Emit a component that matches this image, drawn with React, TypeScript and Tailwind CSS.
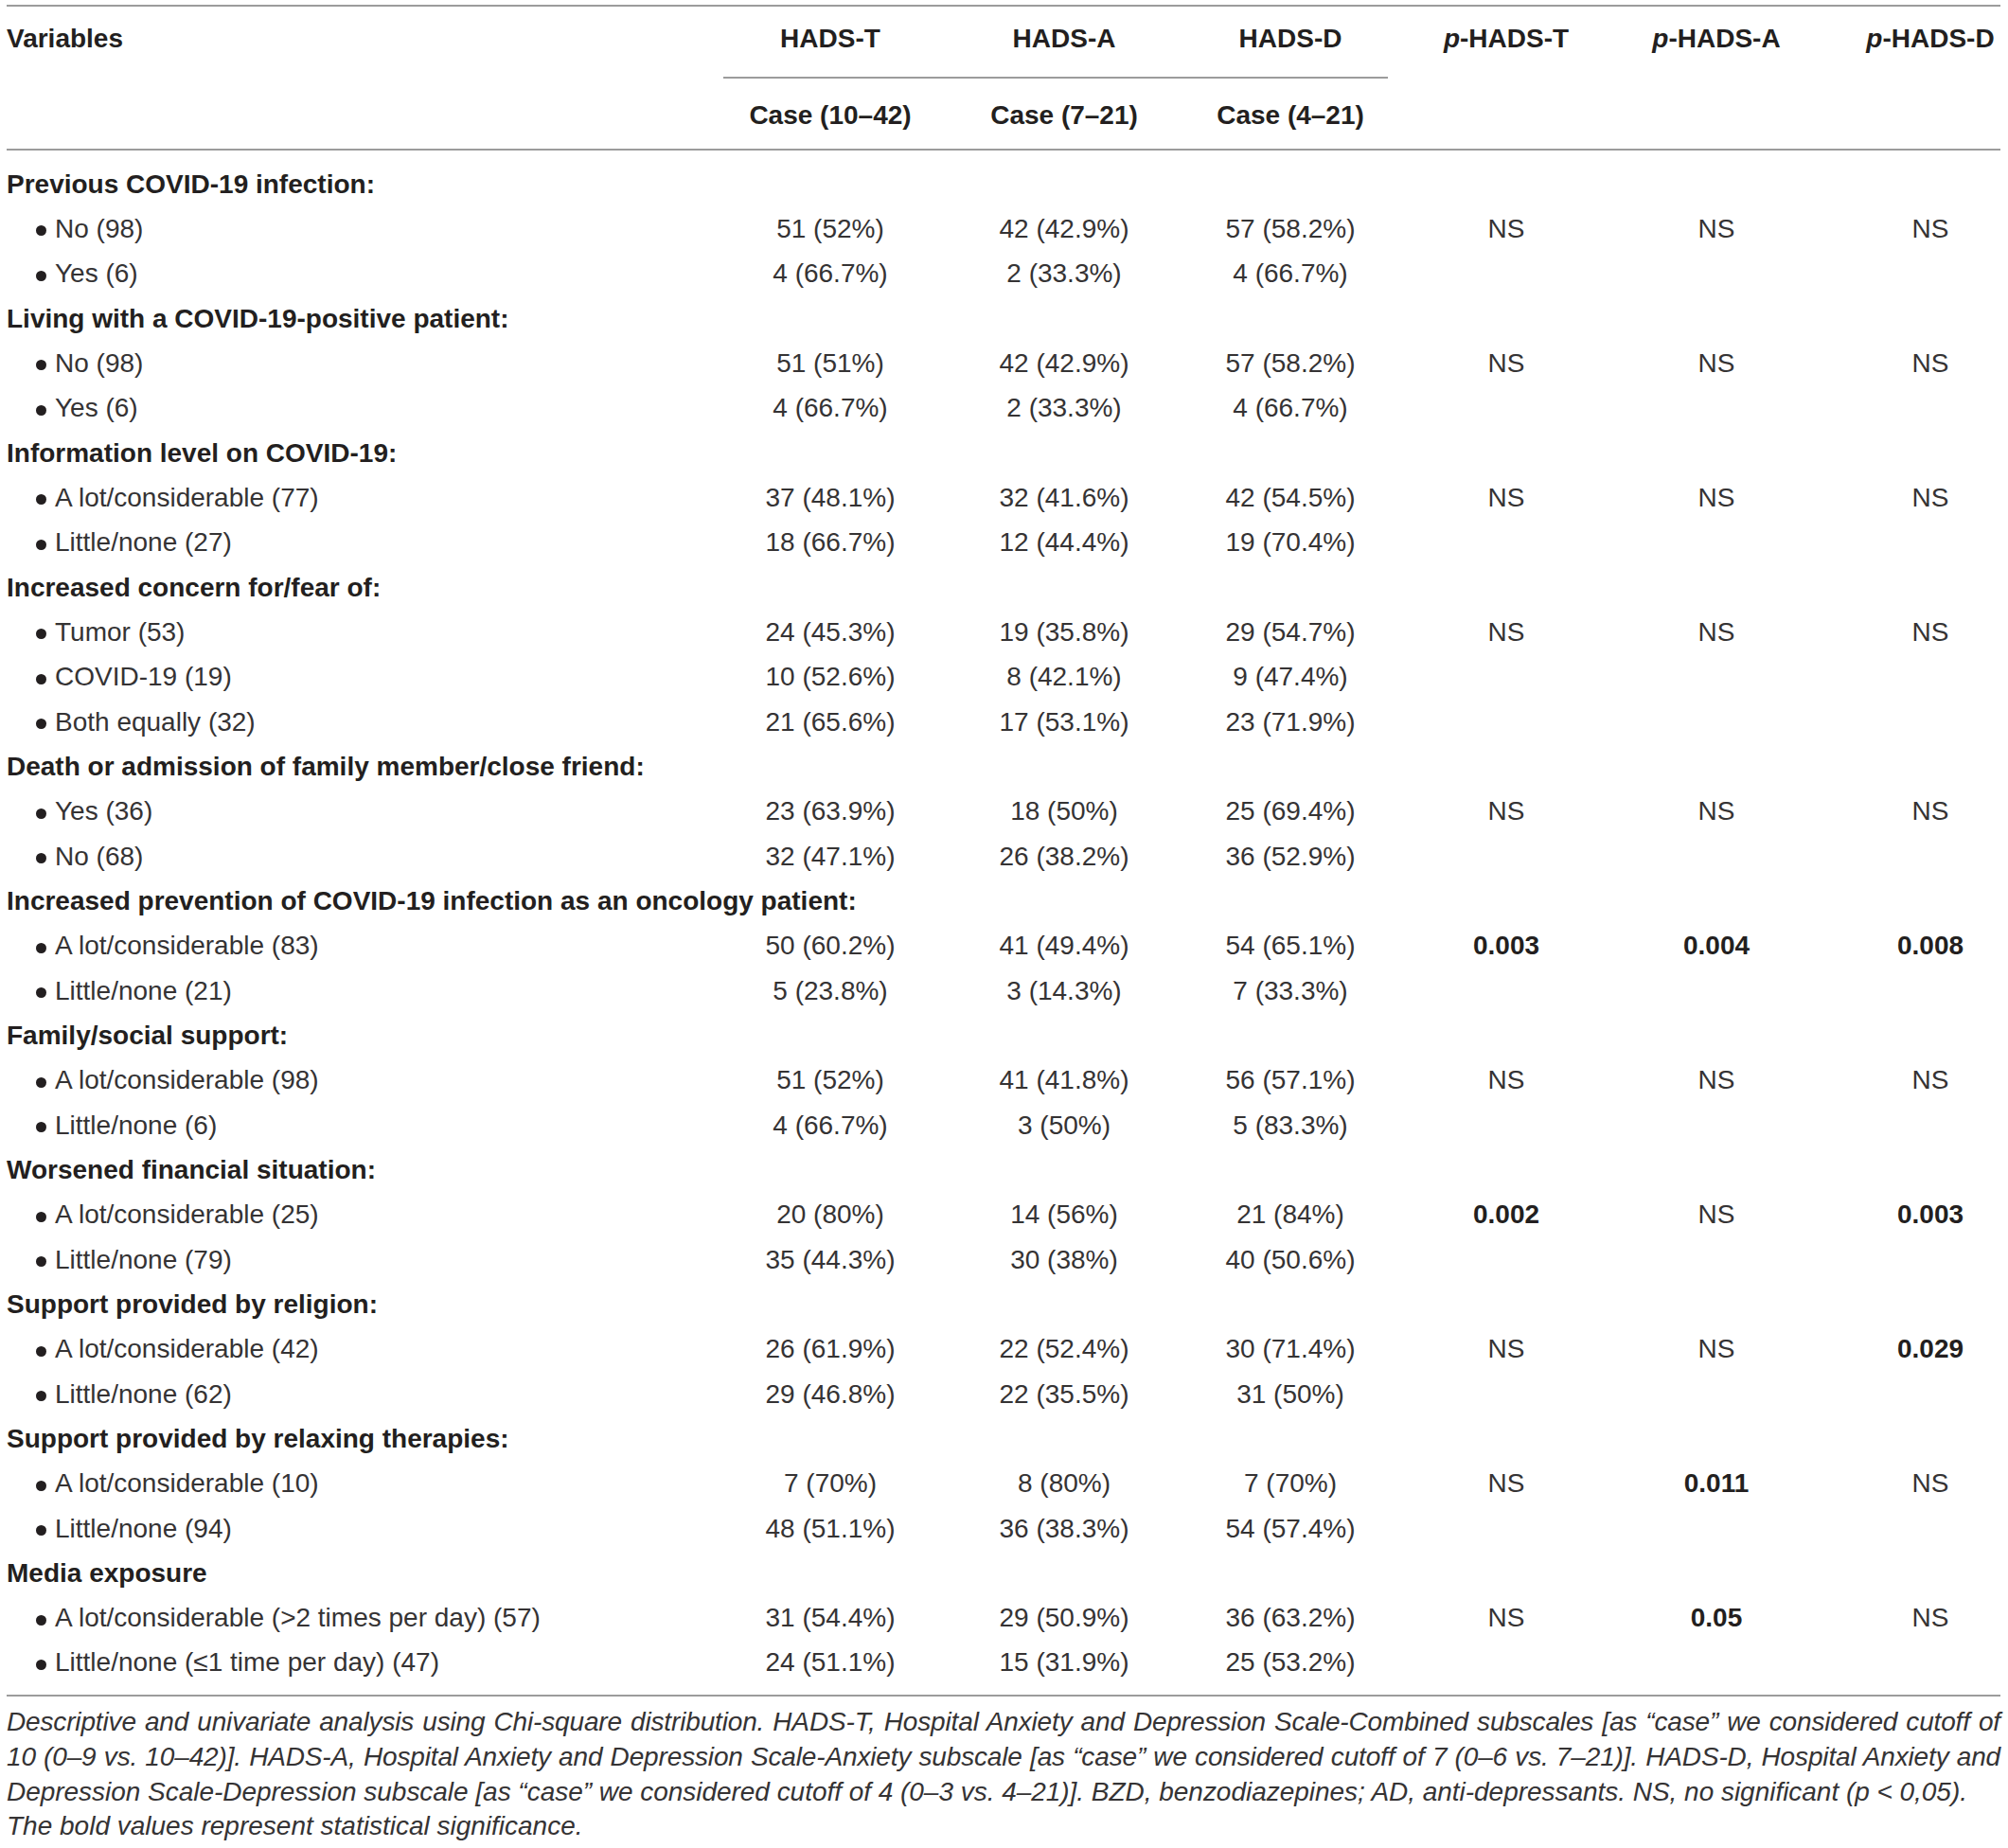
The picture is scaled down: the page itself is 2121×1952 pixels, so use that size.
const cols = "grid grid-cols-[750px_254px_240px_238px_218px_226px_195px]"

type Sub = { label: string; vals: string[]; ps?: string[] }
type Group = { title: string; rows: Sub[] }

const groups: Group[] = [
  {
    title: "Previous COVID-19 infection:",
    rows: [
      { label: "No (98)", vals: ["51 (52%)", "42 (42.9%)", "57 (58.2%)"], ps: ["NS", "NS", "NS"] },
      { label: "Yes (6)", vals: ["4 (66.7%)", "2 (33.3%)", "4 (66.7%)"] },
    ],
  },
  {
    title: "Living with a COVID-19-positive patient:",
    rows: [
      { label: "No (98)", vals: ["51 (51%)", "42 (42.9%)", "57 (58.2%)"], ps: ["NS", "NS", "NS"] },
      { label: "Yes (6)", vals: ["4 (66.7%)", "2 (33.3%)", "4 (66.7%)"] },
    ],
  },
  {
    title: "Information level on COVID-19:",
    rows: [
      { label: "A lot/considerable (77)", vals: ["37 (48.1%)", "32 (41.6%)", "42 (54.5%)"], ps: ["NS", "NS", "NS"] },
      { label: "Little/none (27)", vals: ["18 (66.7%)", "12 (44.4%)", "19 (70.4%)"] },
    ],
  },
  {
    title: "Increased concern for/fear of:",
    rows: [
      { label: "Tumor (53)", vals: ["24 (45.3%)", "19 (35.8%)", "29 (54.7%)"], ps: ["NS", "NS", "NS"] },
      { label: "COVID-19 (19)", vals: ["10 (52.6%)", "8 (42.1%)", "9 (47.4%)"] },
      { label: "Both equally (32)", vals: ["21 (65.6%)", "17 (53.1%)", "23 (71.9%)"] },
    ],
  },
  {
    title: "Death or admission of family member/close friend:",
    rows: [
      { label: "Yes (36)", vals: ["23 (63.9%)", "18 (50%)", "25 (69.4%)"], ps: ["NS", "NS", "NS"] },
      { label: "No (68)", vals: ["32 (47.1%)", "26 (38.2%)", "36 (52.9%)"] },
    ],
  },
  {
    title: "Increased prevention of COVID-19 infection as an oncology patient:",
    rows: [
      { label: "A lot/considerable (83)", vals: ["50 (60.2%)", "41 (49.4%)", "54 (65.1%)"], ps: ["0.003", "0.004", "0.008"] },
      { label: "Little/none (21)", vals: ["5 (23.8%)", "3 (14.3%)", "7 (33.3%)"] },
    ],
  },
  {
    title: "Family/social support:",
    rows: [
      { label: "A lot/considerable (98)", vals: ["51 (52%)", "41 (41.8%)", "56 (57.1%)"], ps: ["NS", "NS", "NS"] },
      { label: "Little/none (6)", vals: ["4 (66.7%)", "3 (50%)", "5 (83.3%)"] },
    ],
  },
  {
    title: "Worsened financial situation:",
    rows: [
      { label: "A lot/considerable (25)", vals: ["20 (80%)", "14 (56%)", "21 (84%)"], ps: ["0.002", "NS", "0.003"] },
      { label: "Little/none (79)", vals: ["35 (44.3%)", "30 (38%)", "40 (50.6%)"] },
    ],
  },
  {
    title: "Support provided by religion:",
    rows: [
      { label: "A lot/considerable (42)", vals: ["26 (61.9%)", "22 (52.4%)", "30 (71.4%)"], ps: ["NS", "NS", "0.029"] },
      { label: "Little/none (62)", vals: ["29 (46.8%)", "22 (35.5%)", "31 (50%)"] },
    ],
  },
  {
    title: "Support provided by relaxing therapies:",
    rows: [
      { label: "A lot/considerable (10)", vals: ["7 (70%)", "8 (80%)", "7 (70%)"], ps: ["NS", "0.011", "NS"] },
      { label: "Little/none (94)", vals: ["48 (51.1%)", "36 (38.3%)", "54 (57.4%)"] },
    ],
  },
  {
    title: "Media exposure",
    rows: [
      { label: "A lot/considerable (>2 times per day) (57)", vals: ["31 (54.4%)", "29 (50.9%)", "36 (63.2%)"], ps: ["NS", "0.05", "NS"] },
      { label: "Little/none (≤1 time per day) (47)", vals: ["24 (51.1%)", "15 (31.9%)", "25 (53.2%)"] },
    ],
  },
]

function Rule() {
  return <div className="ml-[7px] mr-[8px] h-[2px] bg-[#9c9c9c]" />
}

function PCell({ v, last }: { v?: string; last?: boolean }) {
  const bold = v !== undefined && v !== "NS"
  return (
    <div className={`text-center ${last ? "pl-[31px]" : ""} ${bold ? "font-bold text-[#231f20]" : ""}`}>
      {v}
    </div>
  )
}

function SubRow({ row }: { row: Sub }) {
  return (
    <div className={`${cols} h-[47.34px] items-center text-[#353334]`}>
      <div className="flex items-center pl-[38px] whitespace-nowrap">
        <span className="mr-[9px] inline-block h-[11px] w-[11px] translate-y-[2px] rounded-full bg-[#231f20]" />
        {row.label}
      </div>
      {row.vals.map((v, i) => (
        <div key={i} className="text-center">
          {v}
        </div>
      ))}
      <PCell v={row.ps?.[0]} />
      <PCell v={row.ps?.[1]} />
      <PCell v={row.ps?.[2]} last />
    </div>
  )
}

function PHead({ name, last }: { name: string; last?: boolean }) {
  return (
    <div className={`row-start-1 pt-[18px] text-center ${last ? "pl-[31px]" : ""}`}>
      <span className="italic">p</span>-{name}
    </div>
  )
}

export default function App() {
  return (
    <div className="h-[1952px] w-[2121px] overflow-hidden bg-white pt-[5px] font-['Liberation_Sans',Arial,sans-serif] text-[28px] leading-[32px] text-[#231f20]">
      <Rule />
      <div className={`${cols} grid-rows-[74px_2px_74px] font-bold`}>
        <div className="col-start-1 row-start-1 pl-[7px] pt-[18px]">Variables</div>
        <div className="col-start-2 row-start-1 pt-[18px] text-center">HADS-T</div>
        <div className="col-start-3 row-start-1 pt-[18px] text-center">HADS-A</div>
        <div className="col-start-4 row-start-1 pt-[18px] text-center">HADS-D</div>
        <div className="col-start-5 row-start-1">
          <PHead name="HADS-T" />
        </div>
        <div className="col-start-6 row-start-1">
          <PHead name="HADS-A" />
        </div>
        <div className="col-start-7 row-start-1">
          <PHead name="HADS-D" last />
        </div>
        <div className="col-span-3 col-start-2 row-start-2 ml-[14px] mr-[16px] bg-[#9c9c9c]" />
        <div className="col-start-2 row-start-3 pt-[23px] text-center">Case (10–42)</div>
        <div className="col-start-3 row-start-3 pt-[23px] text-center">Case (7–21)</div>
        <div className="col-start-4 row-start-3 pt-[23px] text-center">Case (4–21)</div>
      </div>
      <Rule />
      <div className="pb-[10px] pt-[12px]">
        {groups.map((g) => (
          <div key={g.title}>
            <div className="flex h-[47.34px] items-center whitespace-nowrap pl-[7px] font-bold">{g.title}</div>
            {g.rows.map((r) => (
              <SubRow key={r.label} row={r} />
            ))}
          </div>
        ))}
      </div>
      <Rule />
      <div className="ml-[7px] mr-[8px] pt-[9px] text-[28px] italic leading-[36.7px] text-[#353334]">
        <p className="text-justify tracking-[-0.15px] [text-align-last:justify]">
          Descriptive and univariate analysis using Chi-square distribution. HADS-T, Hospital Anxiety and Depression Scale-Combined subscales [as “case” we considered cutoff of
        </p>
        <p className="text-justify tracking-[-0.15px] [text-align-last:justify]">
          10 (0–9 vs. 10–42)]. HADS-A, Hospital Anxiety and Depression Scale-Anxiety subscale [as “case” we considered cutoff of 7 (0–6 vs. 7–21)]. HADS-D, Hospital Anxiety and
        </p>
        <p className="whitespace-nowrap tracking-[-0.03px]">
          Depression Scale-Depression subscale [as “case” we considered cutoff of 4 (0–3 vs. 4–21)]. BZD, benzodiazepines; AD, anti-depressants. NS, no significant (p &lt; 0,05).
        </p>
        <p className="whitespace-nowrap">The bold values represent statistical significance.</p>
      </div>
    </div>
  )
}
